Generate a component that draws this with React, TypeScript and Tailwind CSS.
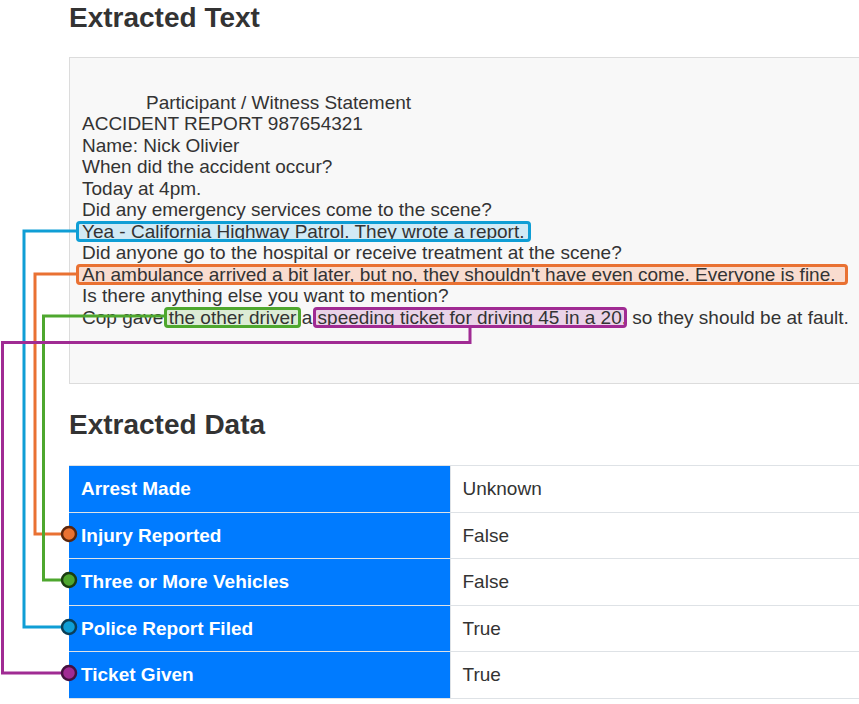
const rows = [
  { label: 'Arrest Made', value: 'Unknown' },
  { label: 'Injury Reported', value: 'False' },
  { label: 'Three or More Vehicles', value: 'False' },
  { label: 'Police Report Filed', value: 'True' },
  { label: 'Ticket Given', value: 'True' },
]

const Connectors: React.FC = () => (
  <svg
    className="pointer-events-none absolute left-0 top-0 z-10"
    width={859}
    height={704}
    viewBox="0 0 859 704"
    fill="none"
  >
    {/* police report -> blue */}
    <polyline points="77,231 24,231 24,627 62,627" stroke="#0F9ED5" strokeWidth={3} />
    {/* injury -> orange */}
    <polyline points="77,274 35,274 35,534 62,534" stroke="#E97132" strokeWidth={3} />
    {/* vehicles -> green */}
    <polyline points="164,316 43.5,316 43.5,580 62,580" stroke="#4EA72E" strokeWidth={3} />
    {/* ticket -> purple */}
    <polyline points="470,328 470,342.5 2.5,342.5 2.5,673 62,673" stroke="#A02B93" strokeWidth={3} />

    <circle cx={69} cy={534} r={7} fill="#E97132" stroke="#5c260b" strokeWidth={2.5} />
    <circle cx={69} cy={580} r={7} fill="#4EA72E" stroke="#1b3d0f" strokeWidth={2.5} />
    <circle cx={69} cy={627} r={7} fill="#0F9ED5" stroke="#0a3f57" strokeWidth={2.5} />
    <circle cx={69} cy={673} r={7} fill="#A02B93" stroke="#45113f" strokeWidth={2.5} />
  </svg>
)

const App: React.FC = () => {
  return (
    <div className="relative h-[704px] w-[859px] overflow-hidden bg-white font-['Liberation_Sans',Arial,sans-serif] text-[#333]">
      <div className="ml-[69px] w-[840px] pt-[1px]">
        <h2 className="text-[28px] font-bold leading-[34px] text-[#333]">Extracted Text</h2>

        <div className="mt-[22px] border border-[#dcdcdc] bg-[#f8f8f8] p-[12px] text-[19px] leading-[21.5px] whitespace-pre">
          <div>&nbsp;</div>
          <div className="pl-[64px]">Participant / Witness Statement</div>
          <div>ACCIDENT REPORT 987654321</div>
          <div>Name: Nick Olivier</div>
          <div>When did the accident occur?</div>
          <div>Today at 4pm.</div>
          <div>Did any emergency services come to the scene?</div>
          <div>
            <span className="-mx-[6px] rounded-[4px] bg-[#d1eaf5] px-[6px] outline-[3px] -outline-offset-[3px] outline-[#0F9ED5] outline-solid">
              Yea - California Highway Patrol. They wrote a report.
            </span>
          </div>
          <div>Did anyone go to the hospital or receive treatment at the scene?</div>
          <div>
            <span className="-ml-[6px] -mr-[12px] rounded-[4px] bg-[#f9dccf] pl-[6px] pr-[12px] outline-[3px] -outline-offset-[3px] outline-[#E97132] outline-solid">
              An ambulance arrived a bit later, but no, they shouldn't have even come. Everyone is fine.
            </span>
          </div>
          <div>Is there anything else you want to mention?</div>
          <div>
            Cop gave{' '}
            <span className="-mx-[5px] rounded-[4px] bg-[#dcecd5] px-[5px] outline-[3px] -outline-offset-[3px] outline-[#4EA72E] outline-solid">
              the other driver
            </span>{' '}
            a{' '}
            <span className="-mx-[5px] rounded-[4px] bg-[#ead3e8] px-[5px] outline-[3px] -outline-offset-[3px] outline-[#A02B93] outline-solid">
              speeding ticket for driving 45 in a 20
            </span>
            , so they should be at fault.
          </div>
          <div>&nbsp;</div>
          <div>&nbsp;</div>
        </div>

        <h2 className="mt-[24px] text-[28px] font-bold leading-[34px] text-[#333]">Extracted Data</h2>

        <table className="mt-[23px] w-full border-collapse text-[19px] leading-[21.5px]">
          <tbody>
            {rows.map((r) => (
              <tr key={r.label} className="border-b border-t border-[#dee2e6]">
                <th className="w-[381px] border-r border-[#dee2e6] bg-[#007bff] p-[12px] text-left font-bold text-white">
                  {r.label}
                </th>
                <td className="p-[12px] text-[#333]">{r.value}</td>
              </tr>
            ))}
          </tbody>
        </table>
      </div>

      <Connectors />
    </div>
  )
}

export default App
